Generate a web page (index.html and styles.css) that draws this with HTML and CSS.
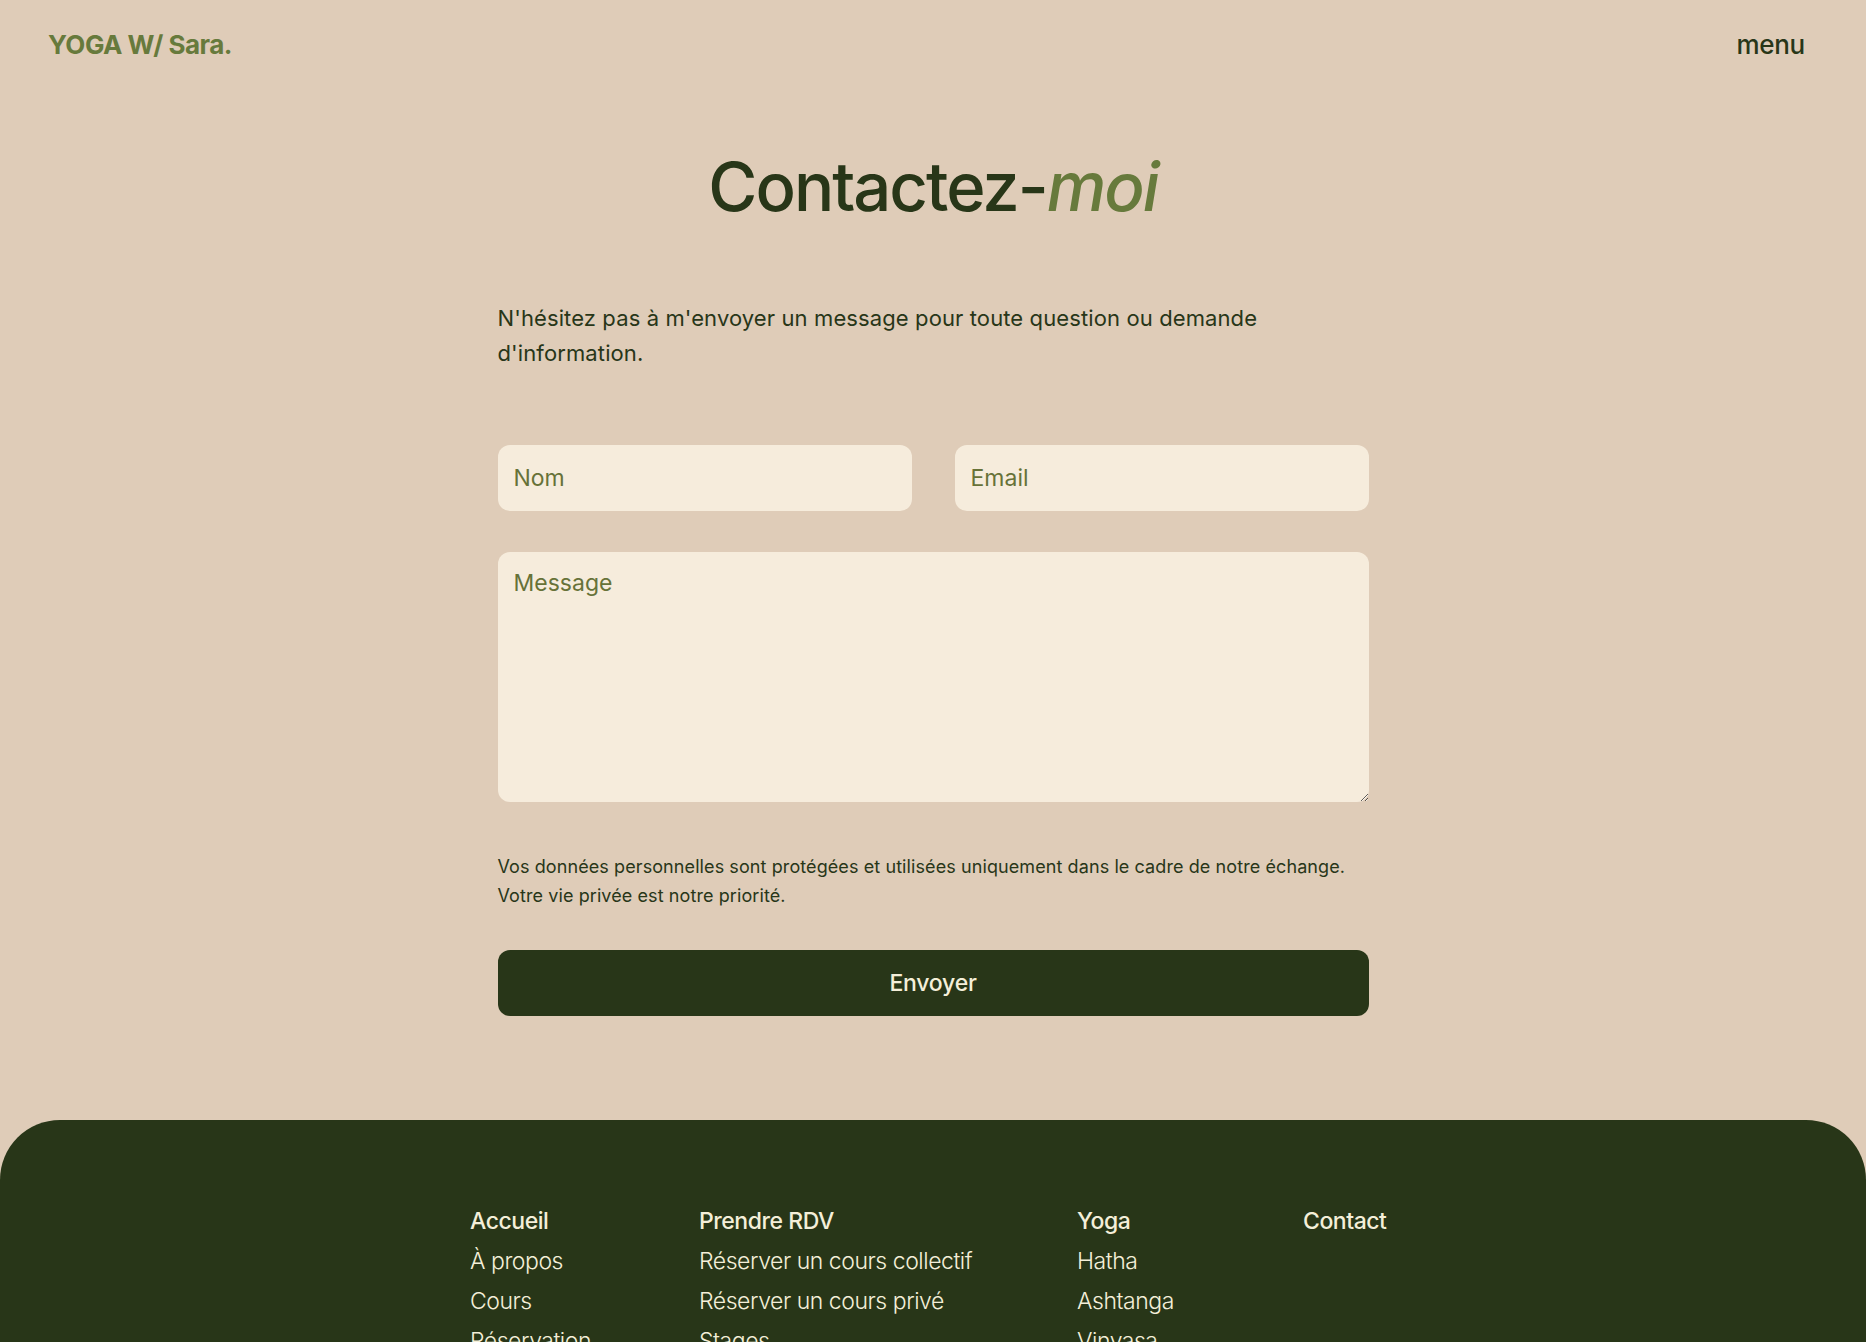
FILE: index.html
```html
<!DOCTYPE html>
<html lang="fr">
<head>
<meta charset="utf-8">
<title>Contact - YOGA W/ Sara.</title>
<link rel="stylesheet" href="styles.css">
</head>
<body>
<header class="site-header">
  <a class="logo" href="#">YOGA W/ Sara.</a>
  <a class="menu-link" href="#">menu</a>
</header>

<main class="contact">
  <h1 class="title">Contactez-<em>moi</em></h1>
  <p class="intro">N'hésitez pas à m'envoyer un message pour toute question ou demande d'information.</p>
  <form class="form">
    <div class="row">
      <input class="field" type="text" placeholder="Nom">
      <input class="field" type="email" placeholder="Email">
    </div>
    <textarea class="field area" placeholder="Message"></textarea>
    <p class="privacy">Vos données personnelles sont protégées et utilisées uniquement dans le cadre de notre échange. Votre vie privée est notre priorité.</p>
    <button class="send" type="button">Envoyer</button>
  </form>
</main>

<footer class="site-footer">
  <nav class="footer-nav">
    <ul class="col">
      <li class="head">Accueil</li>
      <li>À propos</li>
      <li>Cours</li>
      <li>Réservation</li>
    </ul>
    <ul class="col">
      <li class="head">Prendre RDV</li>
      <li>Réserver un cours collectif</li>
      <li>Réserver un cours privé</li>
      <li>Stages</li>
    </ul>
    <ul class="col">
      <li class="head">Yoga</li>
      <li>Hatha</li>
      <li>Ashtanga</li>
      <li>Vinyasa</li>
    </ul>
    <ul class="col">
      <li class="head">Contact</li>
    </ul>
  </nav>
</footer>
</body>
</html>
```

FILE: styles.css
```css
* { box-sizing: border-box; }
html, body { margin: 0; padding: 0; }
body {
  background: #dfccb8;
  font-family: Inter, "Noto Sans", "Liberation Sans", sans-serif;
  color: #283618;
  height: 1342px;
  overflow: hidden;
}
a { text-decoration: none; }

.site-header {
  display: flex;
  justify-content: space-between;
  align-items: center;
  height: 88px;
  padding: 0 61px 0 48px;
}
.logo {
  color: #677a3c;
  font-weight: 700;
  font-size: 26px;
  letter-spacing: -0.02em;
}
.menu-link {
  color: #283618;
  font-size: 26px;
  font-weight: 500;
  letter-spacing: -0.01em;
}

.contact {
  width: 871px;
  margin: 0 auto;
  display: flex;
  flex-direction: column;
}
.title {
  margin: 58px 0 0;
  text-align: center;
  font-size: 67px;
  line-height: 82px;
  font-weight: 500;
  letter-spacing: -0.03em;
  color: #283618;
}
.title em {
  color: #677a3c;
  font-style: italic;
}
.intro {
  margin: 73px 0 0;
  max-width: 800px;
  font-size: 22px;
  line-height: 35px;
  letter-spacing: 0.005em;
}

.form {
  display: flex;
  flex-direction: column;
  margin-top: 74px;
}
.row {
  display: flex;
  gap: 43px;
}
.field {
  flex: 1 1 0;
  min-width: 0;
  height: 66px;
  border: none;
  border-radius: 12px;
  background: #f6ecdc;
  padding: 0 16px;
  font-family: inherit;
  font-size: 23px;
  color: #283618;
  outline: none;
}
.field::placeholder { color: #677238; opacity: 1; }
.area {
  flex: none;
  margin-top: 41px;
  height: 250px;
  padding: 16px 16px;
  line-height: 30px;
  resize: vertical;
}
.privacy {
  margin: 50px 0 0;
  font-size: 18px;
  line-height: 29px;
  letter-spacing: 0.005em;
}
.send {
  margin-top: 40px;
  height: 66px;
  border: none;
  border-radius: 12px;
  background: #283618;
  color: #f4efd9;
  font-family: inherit;
  font-size: 23px;
  font-weight: 500;
  letter-spacing: -0.01em;
}

.site-footer {
  margin-top: 104px;
  background: #283618;
  border-radius: 60px 60px 0 0;
  padding-top: 81px;
  min-height: 420px;
}
.footer-nav {
  display: grid;
  grid-template-columns: 229px 378px 226px auto;
  padding-left: 470px;
}
.col {
  list-style: none;
  margin: 0;
  padding: 0;
}
.col li {
  color: #f4efd9;
  font-size: 23px;
  line-height: 40px;
  font-weight: 300;
  letter-spacing: -0.02em;
}
.col li.head {
  font-weight: 500;
}
```
